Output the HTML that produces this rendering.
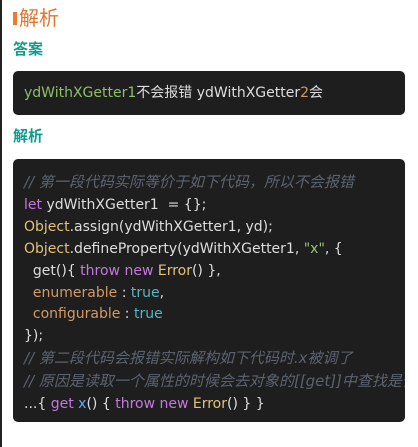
<!DOCTYPE html>
<html><head><meta charset="utf-8"><style>
body{margin:0;width:418px;height:447px;background:#fff;font-family:"DejaVu Sans","Noto Sans CJK SC",sans-serif;position:relative;overflow:hidden}
.lb{position:absolute;left:0;top:0;width:2px;height:447px;background:#222}
.t{position:absolute;left:13px;top:4px;font-size:20px;color:#e0752f;line-height:26px;font-family:"Noto Sans CJK SC",sans-serif}
.t i{display:inline-block;width:4px;height:13px;background:#f07a2a;vertical-align:0px;margin-right:2px}
.h{position:absolute;left:13px;font-size:15px;font-weight:bold;color:#0f9b8e;line-height:20px;font-family:"Noto Sans CJK SC",sans-serif}
.box{position:absolute;left:13px;width:392px;background:#1e1e1e;border-radius:5px;color:#ddd;font-size:14px}
.c{white-space:pre;line-height:21.9px}
.cm{color:#5c6370;font-style:italic;font-size:15px}
.kw{color:#c678dd}.ob{color:#e5c07b}.st{color:#98c379}.pr{color:#d19a66}.bo{color:#56b6c2}.fn{color:#61afef}
</style></head><body>
<div class="lb"></div>
<div class="t"><i></i>解析</div>
<div class="h" style="top:39px">答案</div>
<div class="box" style="top:71px;height:44px;line-height:44px;padding-left:11px;box-sizing:border-box"><span style="color:#8fbf6a">ydWithXGetter1</span>不会报错 ydWithXGetter<span style="color:#d19a66">2</span>会</div>
<div class="h" style="top:126px">解析</div>
<div class="box" style="top:159px;height:263px;padding:13px 0 0 11px;box-sizing:border-box;overflow:hidden"><div class="c"><span class="cm">// 第一段代码实际等价于如下代码，所以不会报错</span>
<span class="kw">let</span> ydWithXGetter1  = {};
<span class="ob">Object</span>.assign(ydWithXGetter1, yd);
<span class="ob">Object</span>.defineProperty(ydWithXGetter1, <span class="st">"x"</span>, {
  get(){ <span class="kw">throw</span> <span class="kw">new</span> <span class="ob">Error</span>() },
  <span class="pr">enumerable</span> : <span class="bo">true</span>,
  <span class="pr">configurable</span> : <span class="bo">true</span>
});
<span class="cm">// 第二段代码会报错实际解构如下代码时.x被调了</span>
<span class="cm">// 原因是读取一个属性的时候会去对象的[[get]]中查找是否有</span>
...{ <span class="kw">get</span> <span class="fn">x</span>() { <span class="kw">throw</span> <span class="kw">new</span> <span class="ob">Error</span>() } }</div></div>
</body></html>
